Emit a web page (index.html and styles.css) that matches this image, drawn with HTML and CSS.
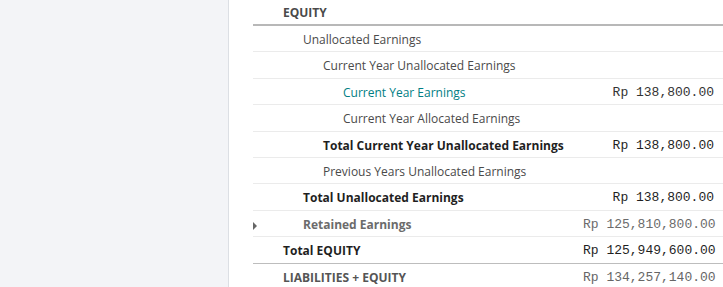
FILE: index.html
```html
<!DOCTYPE html>
<html>
<head>
<meta charset="utf-8">
<link rel="stylesheet" href="styles.css">
</head>
<body>
<div class="layout">
  <aside class="sidebar"></aside>
  <main class="content">
    <table class="report">
      <tbody>
        <tr class="row head">
          <td class="caret"></td>
          <td class="name lvl0">EQUITY</td>
          <td class="amount"></td>
        </tr>
        <tr class="row">
          <td class="caret"></td>
          <td class="name lvl1">Unallocated Earnings</td>
          <td class="amount"></td>
        </tr>
        <tr class="row">
          <td class="caret"></td>
          <td class="name lvl2">Current Year Unallocated Earnings</td>
          <td class="amount"></td>
        </tr>
        <tr class="row">
          <td class="caret"></td>
          <td class="name lvl3 link">Current Year Earnings</td>
          <td class="amount">Rp 138,800.00</td>
        </tr>
        <tr class="row">
          <td class="caret"></td>
          <td class="name lvl3">Current Year Allocated Earnings</td>
          <td class="amount"></td>
        </tr>
        <tr class="row total">
          <td class="caret"></td>
          <td class="name lvl2">Total Current Year Unallocated Earnings</td>
          <td class="amount">Rp 138,800.00</td>
        </tr>
        <tr class="row">
          <td class="caret"></td>
          <td class="name lvl2">Previous Years Unallocated Earnings</td>
          <td class="amount"></td>
        </tr>
        <tr class="row total">
          <td class="caret"></td>
          <td class="name lvl1">Total Unallocated Earnings</td>
          <td class="amount">Rp 138,800.00</td>
        </tr>
        <tr class="row folded">
          <td class="caret"><span class="tri"></span></td>
          <td class="name lvl1">Retained Earnings</td>
          <td class="amount">Rp 125,810,800.00</td>
        </tr>
        <tr class="row total end">
          <td class="caret"></td>
          <td class="name lvl0">Total EQUITY</td>
          <td class="amount">Rp 125,949,600.00</td>
        </tr>
        <tr class="row grand">
          <td class="caret"></td>
          <td class="name lvl0">LIABILITIES + EQUITY</td>
          <td class="amount">Rp 134,257,140.00</td>
        </tr>
      </tbody>
    </table>
  </main>
</div>
</body>
</html>
```
FILE: styles.css
```css
html, body {
  margin: 0;
  padding: 0;
  background: #ffffff;
}
body {
  font-family: "Open Sans", "Noto Sans", sans-serif;
  font-size: 12px;
  color: #4a4a4a;
  overflow: hidden;
}
.layout {
  display: flex;
  height: 287px;
}
.sidebar {
  width: 228px;
  flex: none;
  background: #f3f4f7;
  border-right: 1px solid #dcdfe4;
}
.content {
  flex: 1;
  padding-left: 24px;
  overflow: hidden;
}
.report {
  border-collapse: collapse;
  width: 470px;
  table-layout: fixed;
}
.report td {
  padding: 4px 0 2px;
  height: 19.4px;
  line-height: 19.4px;
  white-space: nowrap;
  border-bottom: 1px solid #ebebeb;
  box-sizing: content-box;
}
.caret {
  width: 10px;
}
.name {
  width: 300px;
}
.lvl0 { padding-left: 20px !important; }
.lvl1 { padding-left: 40px !important; }
.lvl2 { padding-left: 60px !important; }
.lvl3 { padding-left: 80px !important; }
.amount {
  text-align: right;
  padding-right: 9px !important;
  font-family: "Liberation Mono", "Courier New", monospace;
  font-size: 13px;
  color: #333333;
}
.row.head td {
  padding: 3px 0 1.6px;
  border-bottom: 2px solid #b8b8b8;
  font-weight: 700;
  color: #4a4a4a;
}
.link {
  color: #017e84;
}
.total .name {
  font-weight: 700;
  color: #1f1f1f;
}
.total .amount {
  color: #1f1f1f;
}
.folded .name {
  font-weight: 700;
  color: #6b6b6b;
}
.folded .amount {
  color: #6b6b6b;
}
.row.end td {
  border-bottom: 1px solid #bdbdbd;
}
.grand .name {
  font-weight: 700;
  color: #555555;
}
.grand .amount {
  color: #666666;
}
.tri {
  display: inline-block;
  width: 0;
  height: 0;
  border-top: 4px solid transparent;
  border-bottom: 4px solid transparent;
  border-left: 4px solid #666666;
  vertical-align: middle;
}
```
